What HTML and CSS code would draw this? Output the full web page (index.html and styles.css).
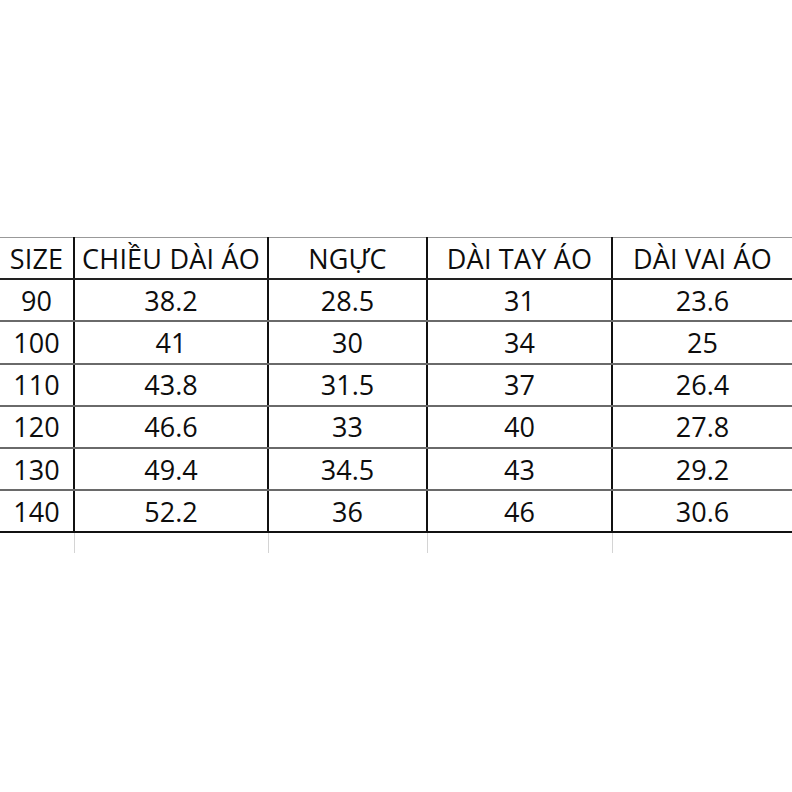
FILE: index.html
```html
<!DOCTYPE html>
<html lang="vi">
<head>
<meta charset="utf-8">
<link rel="stylesheet" href="styles.css">
</head>
<body>
<div class="page">
  <table class="sizes">
    <colgroup>
      <col class="c1"><col class="c2"><col class="c3"><col class="c4"><col class="c5">
    </colgroup>
    <thead>
      <tr><th>SIZE</th><th>CHIỀU DÀI ÁO</th><th>NGỰC</th><th>DÀI TAY ÁO</th><th>DÀI VAI ÁO</th></tr>
    </thead>
    <tbody>
      <tr><td>90</td><td>38.2</td><td>28.5</td><td>31</td><td>23.6</td></tr>
      <tr><td>100</td><td>41</td><td>30</td><td>34</td><td>25</td></tr>
      <tr><td>110</td><td>43.8</td><td>31.5</td><td>37</td><td>26.4</td></tr>
      <tr><td>120</td><td>46.6</td><td>33</td><td>40</td><td>27.8</td></tr>
      <tr><td>130</td><td>49.4</td><td>34.5</td><td>43</td><td>29.2</td></tr>
      <tr class="last"><td>140</td><td>52.2</td><td>36</td><td>46</td><td>30.6</td></tr>
      <tr class="ghost"><td></td><td></td><td></td><td></td><td></td></tr>
    </tbody>
  </table>
</div>
</body>
</html>
```

FILE: styles.css
```css
html, body {
  margin: 0;
  padding: 0;
  background: #fff;
}
.page {
  width: 792px;
  height: 792px;
  padding-top: 237px;
  box-sizing: border-box;
}
.sizes {
  width: 792px;
  border-collapse: collapse;
  table-layout: fixed;
  font-family: "Open Sans", "Noto Sans", sans-serif;
  font-size: 27px;
  color: #0d0d0d;
}
.c1 { width: 74px; }
.c2 { width: 194px; }
.c3 { width: 159px; }
.c4 { width: 185px; }
.c5 { width: 180px; }
.sizes th, .sizes td {
  font-weight: normal;
  text-align: center;
  vertical-align: middle;
  height: 40.2px;
  padding: 0;
  border-left: 2px solid #111;
  border-bottom: 2px solid #6a6a6a;
  line-height: 1;
  white-space: nowrap;
}
.sizes th:first-child, .sizes td:first-child { border-left: none; }
.sizes th {
  border-top: 1px solid #999;
  border-bottom: 2px solid #222;
  letter-spacing: 0.2px;
}
.sizes tr.last td { border-bottom: 2px solid #111; }
.sizes tr.ghost td {
  height: 20px;
  border-bottom: none;
  border-left: 1px solid #d4d4d4;
}
.sizes tr.ghost td:first-child { border-left: none; }
```
